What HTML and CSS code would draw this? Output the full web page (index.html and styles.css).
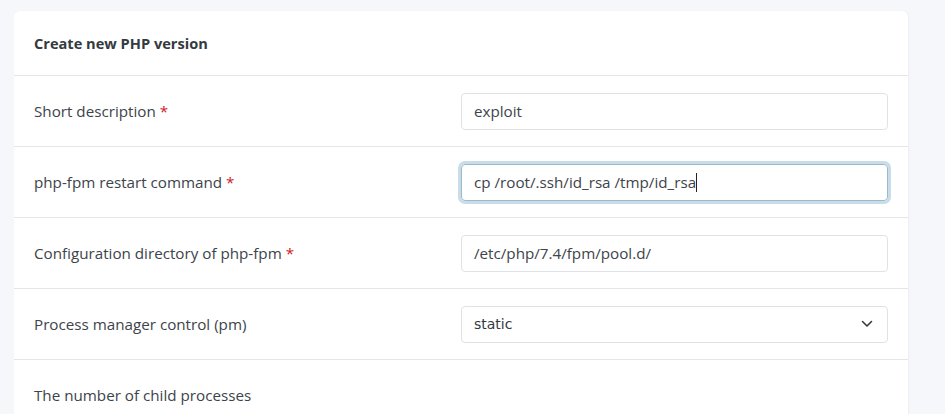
FILE: index.html
```html
<!DOCTYPE html>
<html>
<head>
<meta charset="utf-8">
<link rel="stylesheet" href="styles.css">
</head>
<body>
<div class="card">
  <div class="card-header">Create new PHP version</div>
  <div class="row">
    <label class="label">Short description <span class="req">*</span></label>
    <div class="field"><div class="input">exploit</div></div>
  </div>
  <div class="row">
    <label class="label">php-fpm restart command <span class="req">*</span></label>
    <div class="field"><div class="input focus">cp /root/.ssh/id_rsa /tmp/id_rsa<span class="caret"></span></div></div>
  </div>
  <div class="row">
    <label class="label">Configuration directory of php-fpm <span class="req">*</span></label>
    <div class="field"><div class="input">/etc/php/7.4/fpm/pool.d/</div></div>
  </div>
  <div class="row">
    <label class="label">Process manager control (pm)</label>
    <div class="field"><div class="input select"><span class="sel-text">static</span>
      <svg class="chev" width="12" height="8" viewBox="0 0 12 8"><path d="M1.5 1.5 L6 6 L10.5 1.5" fill="none" stroke="#343a40" stroke-width="1.6" stroke-linecap="round" stroke-linejoin="round"/></svg>
    </div></div>
  </div>
  <div class="row last">
    <label class="label">The number of child processes</label>
    <div class="field"></div>
  </div>
</div>
</body>
</html>
```
FILE: styles.css
```css
html, body { margin: 0; padding: 0; }
body {
  background: #f5f7fa;
  font-family: "Open Sans", "Noto Sans", sans-serif;
  font-size: 15.2px;
  color: #3d434a;
  height: 414px;
  overflow: hidden;
}
.card {
  margin: 11px 0 0 14px;
  width: 894px;
  background: #fff;
  border-radius: 6px 6px 0 0;
  box-shadow: 1px 0 2px rgba(0,0,0,0.04);
  height: 420px;
}
.card-header {
  height: 64px;
  display: flex;
  align-items: center;
  padding: 0 20px;
  font-weight: 700;
  font-size: 14.6px;
  color: #343a40;
  border-bottom: 1px solid #e4e6ea;
}
.row {
  display: grid;
  grid-template-columns: 447px 447px;
  height: 70px;
  border-bottom: 1px solid #e4e6ea;
  align-items: center;
}
.row.last { border-bottom: none; }
.label { padding-left: 20px; }
.req { color: #cd201f; }
.field { padding-right: 20px; }
.input {
  height: 35px;
  border: 1px solid #dfe2e6;
  border-radius: 4px;
  display: flex;
  align-items: center;
  padding: 0 12px;
  color: #3d434a;
}
.input.focus {
  border-color: #9ab9cf;
  box-shadow: 0 0 0 3px #c9dce8;
}
.caret {
  display: inline-block;
  width: 1px;
  height: 19px;
  background: #222;
}
.select { justify-content: space-between; padding-right: 14px; }
.sel-text { font-family: "DejaVu Sans", sans-serif; font-size: 14px; color: #343a40; }
.chev { display: block; }
```
